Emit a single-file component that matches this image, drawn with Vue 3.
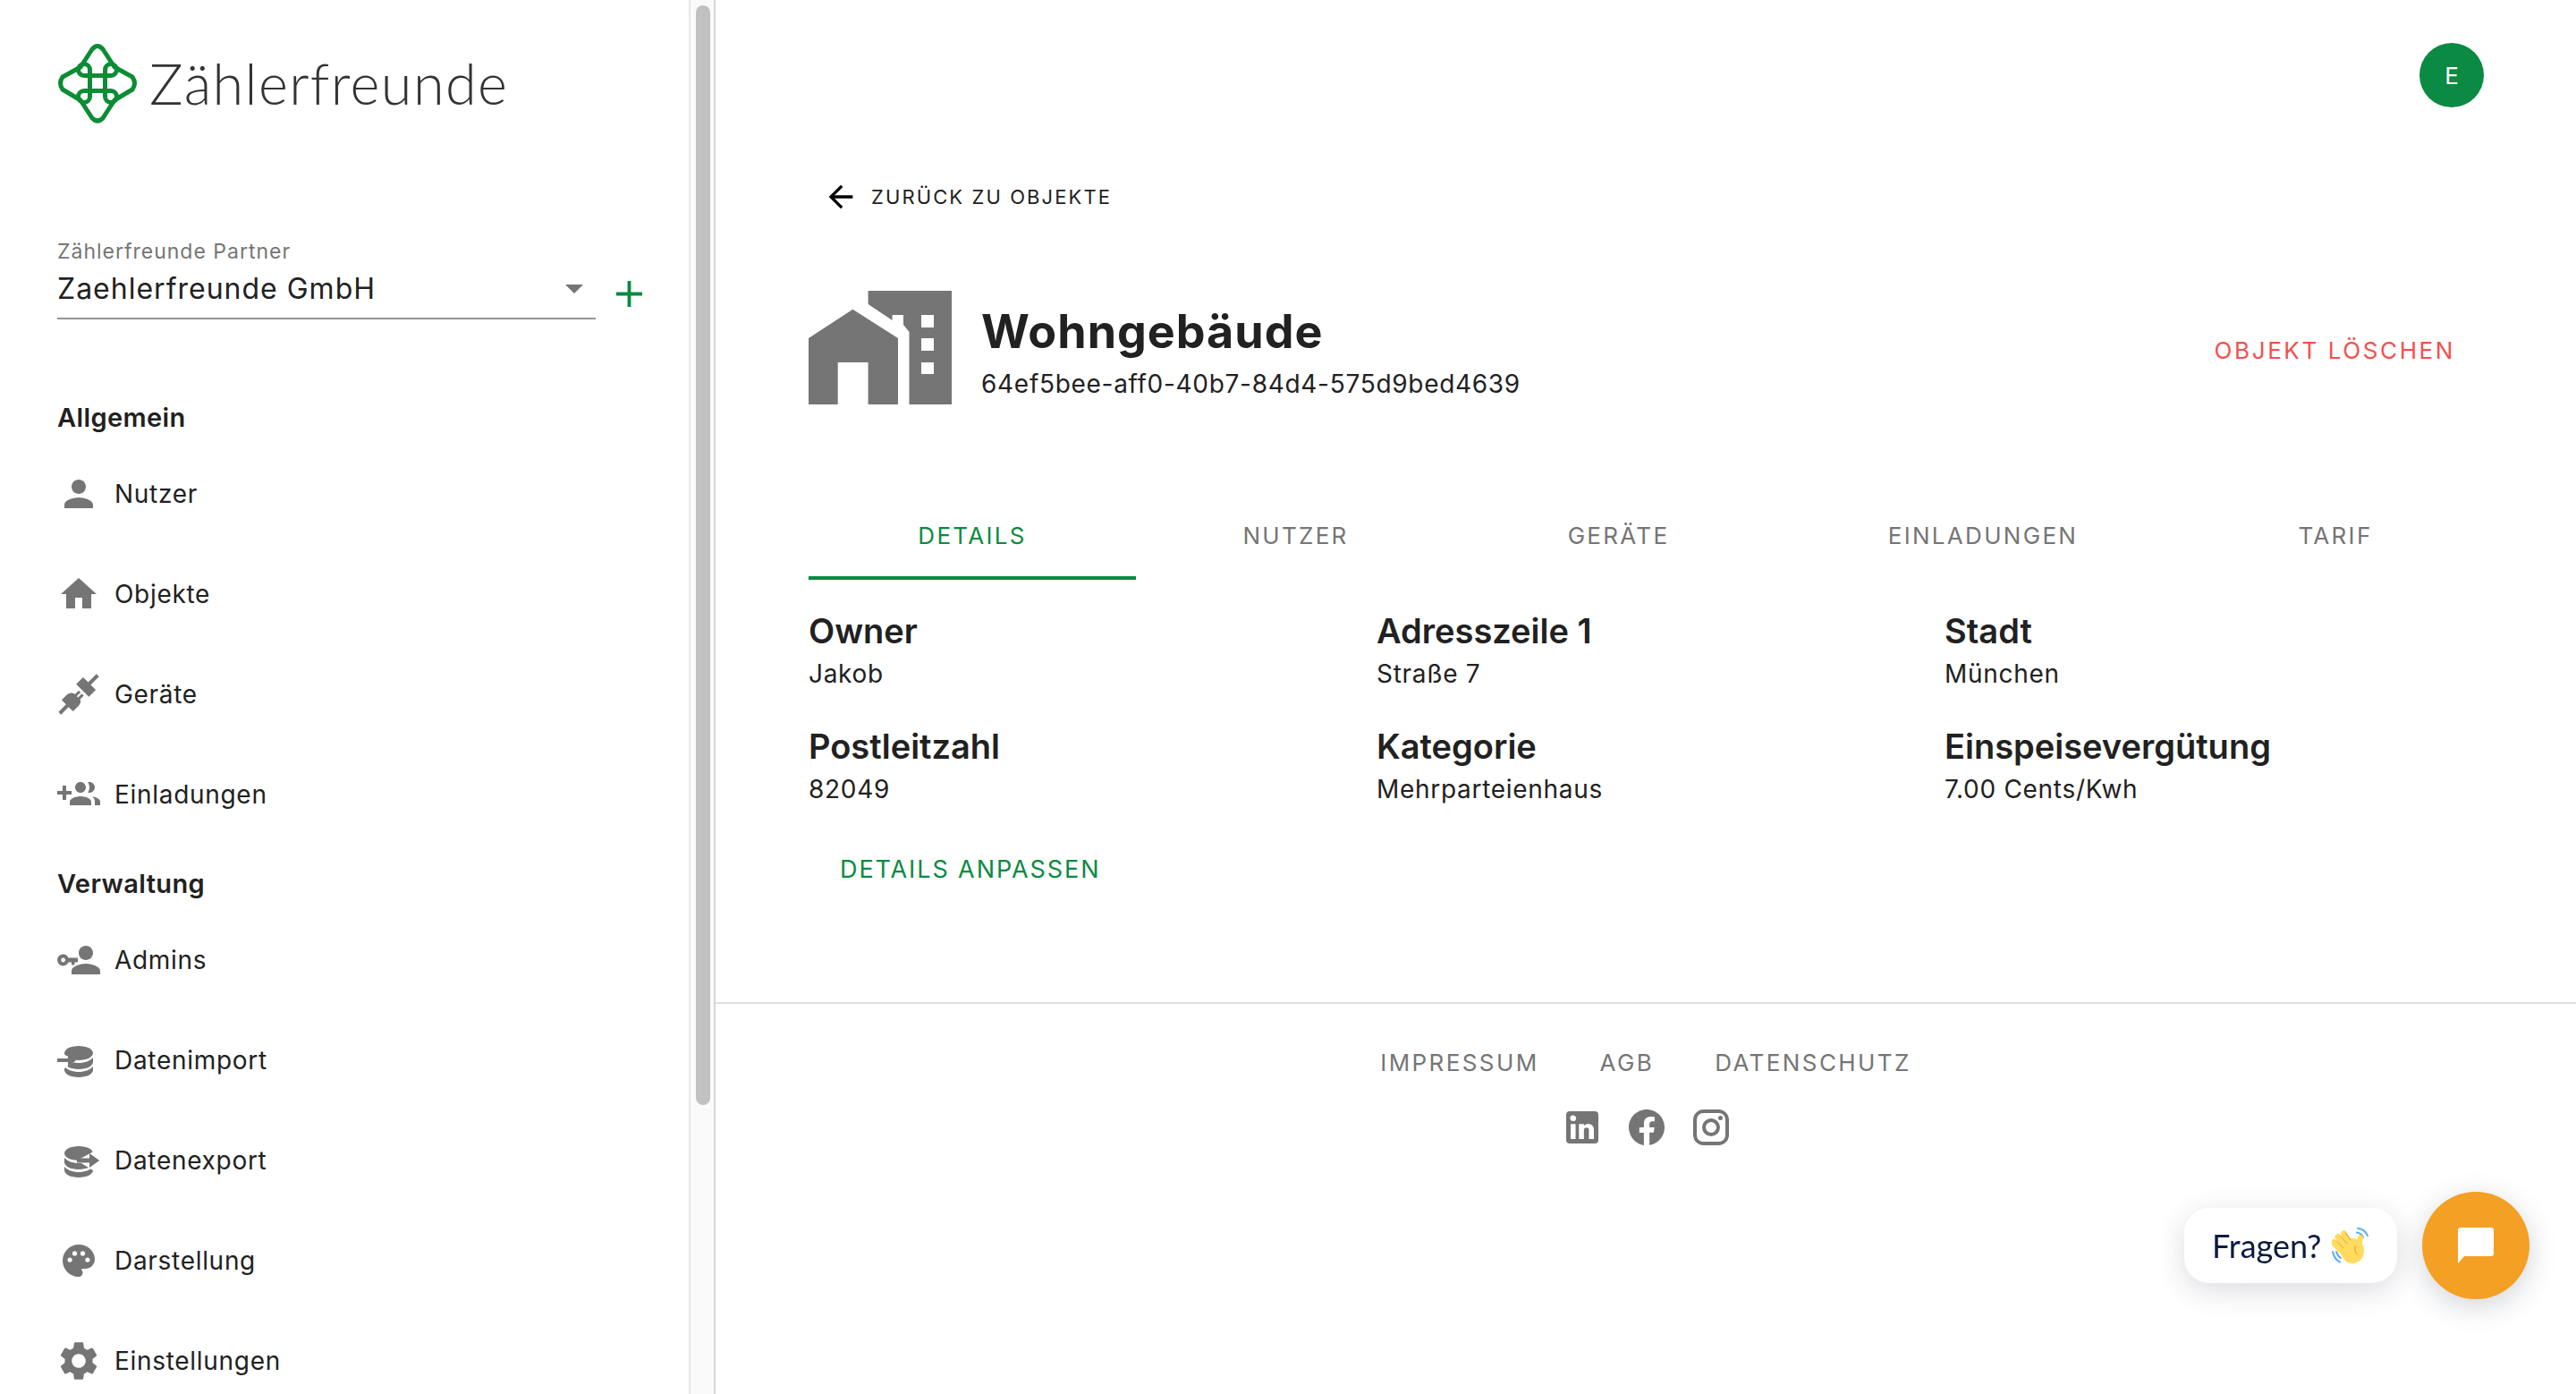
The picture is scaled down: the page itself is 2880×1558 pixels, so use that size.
<script setup>
const db = [
  { d: 'M4 8c0-2.2 3.6-4 8-4s8 1.8 8 4-3.6 4-8 4-8-1.8-8-4z' },
  { d: 'M4 10.5V13c0 2.2 3.6 4 8 4s8-1.8 8-4v-2.5c-1.6 1.9-4.6 3-8 3s-6.4-1.1-8-3z' },
  { d: 'M4 15.5v2c0 2.2 3.6 4 8 4s8-1.8 8-4v-2c-1.6 1.9-4.6 3-8 3s-6.4-1.1-8-3z' },
]

const icons = {
  person: [{ d: 'M12 12c2.21 0 4-1.79 4-4s-1.79-4-4-4-4 1.79-4 4 1.79 4 4 4zm0 2c-2.67 0-8 1.34-8 4v2h16v-2c0-2.66-5.33-4-8-4z' }],
  home: [{ d: 'M10 20v-6h4v6h5v-8h3L12 3 2 12h3v8z' }],
  plug: [
    { d: 'M-3 11H3V7.500H7c2 0 3.500 1.500 3.500 3H13.500V12H10.500V13H13.500V14.500H10.500C10.500 15.500 9 16.500 7 16.500H3V13H-3z', transform: 'rotate(-45 12 12)' },
    { d: 'M15 7h5.500v4H27v2h-6.500v4H15z', transform: 'rotate(-45 12 12)' },
  ],
  groupAdd: [{ d: 'M8 10H5V7H3v3H0v2h3v3h2v-3h3v-2zm10 1c1.66 0 2.99-1.34 2.99-3S19.66 5 18 5c-.32 0-.63.05-.91.14.57.81.9 1.79.9 2.86s-.34 2.04-.9 2.86c.28.09.59.14.91.14zm-5 0c1.66 0 2.99-1.34 2.99-3S14.66 5 13 5s-3 1.34-3 3 1.34 3 3 3zm6.62 2.16c.83.73 1.38 1.66 1.38 2.84v2h3v-2c0-1.54-2.37-2.49-4.38-2.84zM13 13c-2 0-6 1-6 3v2h12v-2c0-2-4-3-6-3z' }],
  admin: [
    { d: 'M16 12c2.21 0 4-1.79 4-4s-1.79-4-4-4-4 1.79-4 4 1.79 4 4 4zm0 2c-2.67 0-8 1.34-8 4v2h16v-2c0-2.66-5.33-4-8-4z' },
    { d: 'M3.3 8.8a3.2 3.2 0 1 0 2.9 4.4H8v1.6h1.7v-1.6h1.8v-2.4H6.2a3.2 3.2 0 0 0-2.9-2zm0 2a1.2 1.2 0 1 1 0 2.4 1.2 1.2 0 0 1 0-2.4z' },
  ],
  dataImport: [
    ...db,
    { d: 'M0 7l10.5 5L2 18H0z', white: true },
    { d: 'M0 11h6V8.6l4.6 3.4L6 15.4V13H0z' },
  ],
  dataExport: [
    ...db,
    { d: 'M24 5l-13 7 13 8z', white: true },
    { d: 'M11 10.8h7V8l5.6 4-5.6 4v-2.8h-7z' },
  ],
  palette: [{ d: 'M12 2C6.49 2 2 6.49 2 12s4.49 10 10 10c1.38 0 2.5-1.12 2.5-2.5 0-.61-.23-1.2-.64-1.67-.08-.1-.13-.21-.13-.33 0-.28.22-.5.5-.5H16c3.31 0 6-2.69 6-6 0-4.96-4.49-9-10-9zm-5.5 11c-.83 0-1.5-.67-1.5-1.5S5.67 10 6.5 10s1.5.67 1.5 1.5S7.33 13 6.5 13zm3-4C8.67 9 8 8.33 8 7.5S8.67 6 9.5 6s1.5.67 1.5 1.5S10.33 9 9.5 9zm5 0c-.83 0-1.5-.67-1.5-1.5S13.67 6 14.5 6s1.5.67 1.5 1.5S15.33 9 14.5 9zm3 4c-.83 0-1.5-.67-1.5-1.5s.67-1.5 1.5-1.5 1.5.67 1.5 1.5-.67 1.5-1.5 1.5z', transform: 'translate(1.2 1.2) scale(.9)' }],
  gear: [{ d: 'M19.14 12.94c.04-.3.06-.61.06-.94 0-.32-.02-.64-.07-.94l2.03-1.58c.18-.14.23-.41.12-.61l-1.92-3.32c-.12-.22-.37-.29-.59-.22l-2.39.96c-.5-.38-1.03-.7-1.62-.94l-.36-2.54c-.04-.24-.24-.41-.48-.41h-3.84c-.24 0-.43.17-.47.41l-.36 2.54c-.59.24-1.13.57-1.62.94l-2.39-.96c-.22-.08-.47 0-.59.22L2.74 8.87c-.12.21-.08.47.12.61l2.03 1.58c-.05.3-.09.63-.09.94s.02.64.07.94l-2.03 1.58c-.18.14-.23.41-.12.61l1.92 3.32c.12.22.37.29.59.22l2.39-.96c.5.38 1.03.7 1.62.94l.36 2.54c.05.24.24.41.48.41h3.84c.24 0 .44-.17.47-.41l.36-2.54c.59-.24 1.13-.56 1.62-.94l2.39.96c.22.08.47 0 .59-.22l1.92-3.32c.12-.22.07-.47-.12-.61l-2.01-1.58zM12 15.6c-1.98 0-3.6-1.62-3.6-3.6s1.62-3.6 3.6-3.6 3.6 1.62 3.6 3.6-1.62 3.6-3.6 3.6z', transform: 'translate(-.96 -.96) scale(1.08)' }],
}

const navGroups = [
  {
    title: 'Allgemein',
    items: [
      { label: 'Nutzer', icon: icons.person },
      { label: 'Objekte', icon: icons.home },
      { label: 'Geräte', icon: icons.plug },
      { label: 'Einladungen', icon: icons.groupAdd },
    ],
  },
  {
    title: 'Verwaltung',
    items: [
      { label: 'Admins', icon: icons.admin },
      { label: 'Datenimport', icon: icons.dataImport },
      { label: 'Datenexport', icon: icons.dataExport },
      { label: 'Darstellung', icon: icons.palette },
      { label: 'Einstellungen', icon: icons.gear },
    ],
  },
]

const tabs = ['Details', 'Nutzer', 'Geräte', 'Einladungen', 'Tarif']

const fields = [
  { label: 'Owner', value: 'Jakob' },
  { label: 'Adresszeile 1', value: 'Straße 7' },
  { label: 'Stadt', value: 'München' },
  { label: 'Postleitzahl', value: '82049' },
  { label: 'Kategorie', value: 'Mehrparteienhaus' },
  { label: 'Einspeisevergütung', value: '7.00 Cents/Kwh' },
]

const socials = [
  'M19 3a2 2 0 0 1 2 2v14a2 2 0 0 1-2 2H5a2 2 0 0 1-2-2V5a2 2 0 0 1 2-2h14m-.5 15.5v-5.3a3.26 3.26 0 0 0-3.26-3.26c-.85 0-1.84.52-2.32 1.3v-1.11h-2.79v8.37h2.79v-4.93c0-.77.62-1.4 1.39-1.4a1.4 1.4 0 0 1 1.4 1.4v4.93h2.79M6.88 8.56a1.68 1.68 0 0 0 1.68-1.68c0-.93-.75-1.69-1.68-1.69a1.69 1.69 0 0 0-1.69 1.69c0 .93.76 1.68 1.69 1.68m1.39 9.94v-8.37H5.5v8.37h2.77z',
  'M12 2.04c-5.5 0-10 4.49-10 10.02 0 5 3.66 9.15 8.44 9.9v-7H7.9v-2.9h2.54V9.85c0-2.51 1.49-3.89 3.78-3.89 1.09 0 2.23.19 2.23.19v2.47h-1.26c-1.24 0-1.63.77-1.63 1.53v1.88h2.78l-.45 2.9h-2.33v7a10 10 0 0 0 8.44-9.9c0-5.53-4.5-10.02-10-10.02z',
  'M7.8 2h8.4C19.4 2 22 4.6 22 7.8v8.4a5.8 5.8 0 0 1-5.8 5.8H7.8C4.6 22 2 19.4 2 16.2V7.8A5.8 5.8 0 0 1 7.8 2m-.2 2A3.6 3.6 0 0 0 4 7.6v8.8C4 18.39 5.61 20 7.6 20h8.8a3.6 3.6 0 0 0 3.6-3.6V7.6C20 5.61 18.39 4 16.4 4H7.6m9.65 1.5a1.25 1.25 0 0 1 1.25 1.25A1.25 1.25 0 0 1 17.25 8 1.25 1.25 0 0 1 16 6.75a1.25 1.25 0 0 1 1.25-1.25M12 7a5 5 0 0 1 5 5 5 5 0 0 1-5 5 5 5 0 0 1-5-5 5 5 0 0 1 5-5m0 2a3 3 0 0 0-3 3 3 3 0 0 0 3 3 3 3 0 0 0 3-3 3 3 0 0 0-3-3z',
]
</script>

<template>
  <div class="page">
    <aside class="sidebar">
      <div class="sidebar-inner">
        <div class="logo">
          <svg class="logo-mark" viewBox="0 0 90 90" fill="none" stroke="#0b8c35" stroke-width="5" stroke-linejoin="round">
            <path d="M39 7Q45 0 51 7L64 27 84 38Q89 45 84 52L64 64 51 84Q45 90 39 84L26 64 6 52Q1 45 6 38L26 27z" />
            <path d="M36.5 60V30a6.5 6.5 0 1 0-6.5 6.5H60a6.5 6.5 0 1 0-6.5-6.5V60a6.5 6.5 0 1 0 6.5-6.5H30a6.5 6.5 0 1 0 6.5 6.5z" />
          </svg>
          <span class="logo-text">Zählerfreunde</span>
        </div>

        <div class="partner">
          <div class="select">
            <span class="select-label">Zählerfreunde Partner</span>
            <div class="select-value">
              <span>Zaehlerfreunde GmbH</span>
              <i class="caret"></i>
            </div>
          </div>
          <svg class="plus" viewBox="0 0 30 30"><path d="M13 0h4v13h13v4H17v13h-4V17H0v-4h13z" /></svg>
        </div>

        <nav v-for="group in navGroups" :key="group.title" class="nav-group">
          <h3>{{ group.title }}</h3>
          <a v-for="item in group.items" :key="item.label" class="nav-item">
            <svg class="nav-icon" viewBox="0 0 24 24">
              <path
                v-for="(part, i) in item.icon"
                :key="i"
                :d="part.d"
                :fill="part.white ? '#fff' : '#757575'"
                :transform="part.transform"
              />
            </svg>
            <span>{{ item.label }}</span>
          </a>
        </nav>
      </div>
      <div class="scrollbar"><div class="scrollbar-thumb"></div></div>
    </aside>

    <main class="main">
      <header class="topbar">
        <div class="avatar">E</div>
      </header>

      <a class="back">
        <svg viewBox="0 0 24 24"><path d="M20 11H7.83l5.59-5.59L12 4l-8 8 8 8 1.41-1.41L7.83 13H20v-2z" /></svg>
        <span>Zurück zu Objekte</span>
      </a>

      <section class="object-head">
        <svg class="building" viewBox="0 0 160 127">
          <path fill-rule="evenodd" d="M66.6 0H160V127H112.5V46L106 38V27H93.6V33L66.6 15zM126 27V41H140V27zM126 53V67H140V53zM126 80V93H140V80z" />
          <path d="M49.4 20.7L100 53V127H66.6V80H32.7V127H0V53z" />
        </svg>
        <div class="object-title">
          <h1>Wohngebäude</h1>
          <p>64ef5bee-aff0-40b7-84d4-575d9bed4639</p>
        </div>
        <button class="delete">Objekt löschen</button>
      </section>

      <div class="tabs">
        <button v-for="(tab, i) in tabs" :key="tab" class="tab" :class="{ active: i === 0 }">{{ tab }}</button>
      </div>

      <div class="fields">
        <div v-for="field in fields" :key="field.label" class="field">
          <h2>{{ field.label }}</h2>
          <p>{{ field.value }}</p>
        </div>
      </div>

      <button class="edit">Details anpassen</button>

      <footer class="footer">
        <div class="footer-links">
          <a>Impressum</a>
          <a>AGB</a>
          <a>Datenschutz</a>
        </div>
        <div class="socials">
          <svg v-for="d in socials" :key="d" viewBox="0 0 24 24"><path :d="d" /></svg>
        </div>
      </footer>
    </main>

    <div class="chat">
      <div class="chat-bubble">
        <span>Fragen?</span>
        <svg class="wave" viewBox="0 0 41 40">
          <g fill="none" stroke="#5dadec" stroke-width="2" stroke-linecap="round">
            <path d="M1 27c1 5 3 9 8 11.500" />
            <path d="M5 27c.7 3 2 5 5 7" />
            <path d="M29 1c5 .5 9 3 11 8" />
            <path d="M28 5.500c3 .5 5.500 2 7 5.500" />
          </g>
          <g fill="#ffdc5d">
            <rect x="3" y="11" width="7" height="20" rx="3.500" transform="rotate(-42 7 21)" />
            <rect x="8" y="5" width="7" height="22" rx="3.500" transform="rotate(-38 12 16)" />
            <rect x="14" y="2" width="7" height="22" rx="3.500" transform="rotate(-32 18 13)" />
            <rect x="28" y="8" width="6" height="17" rx="3" transform="rotate(12 30 16)" />
            <ellipse cx="23" cy="26" rx="13" ry="14" />
          </g>
          <g fill="none" stroke="#ef9645" stroke-width="1" stroke-linecap="round">
            <path d="M26 21c-1 4 1 7 2 9" />
            <path d="M5.500 15l7 7.500M10 10l7 8M15 6l6 8" />
          </g>
        </svg>
      </div>
      <button class="chat-button">
        <svg viewBox="0 0 40 40"><path d="M3 0H37a3 3 0 0 1 3 3V29a3 3 0 0 1-3 3H7L0 40V3a3 3 0 0 1 3-3z" /></svg>
      </button>
    </div>
  </div>
</template>

<style>
html,
body {
  margin: 0;
  overflow: hidden;
  background: #fff;
}
</style>

<style scoped>
.page {
  display: flex;
  height: 1558px;
  font-family: Inter, "Liberation Sans", sans-serif;
  color: #212121;
  overflow: hidden;
}

button {
  border: 0;
  padding: 0;
  background: none;
  font: inherit;
  cursor: pointer;
}

.sidebar {
  flex: 0 0 800px;
  display: flex;
  box-sizing: border-box;
  height: 100%;
  border-right: 2px solid #d6d6d6;
  overflow: hidden;
}

.sidebar-inner {
  flex: 0 0 770px;
  box-sizing: border-box;
  padding: 48px 0 0 64px;
}

.scrollbar {
  flex: 1;
  box-sizing: border-box;
  padding: 6px 0 0 6px;
  background: #fafafa;
  border-left: 2px solid #e8e8e8;
}

.scrollbar-thumb {
  width: 16px;
  height: 1229px;
  border-radius: 8px;
  background: #c1c1c1;
}

.logo {
  display: flex;
  align-items: center;
  gap: 13px;
  height: 90px;
}

.logo-mark {
  width: 90px;
  height: 90px;
  overflow: visible;
}

.logo-text {
  font-family: Lato, sans-serif;
  font-weight: 300;
  font-size: 63px;
  letter-spacing: 1.4px;
  color: #333;
  line-height: 90px;
}

.partner {
  display: flex;
  align-items: flex-end;
  margin-top: 127px;
}

.select {
  flex: 0 0 602px;
  border-bottom: 2px solid #949494;
}

.select-label {
  display: block;
  font-size: 23px;
  line-height: 32px;
  letter-spacing: 1px;
  color: #757575;
}

.select-value {
  display: flex;
  justify-content: space-between;
  align-items: center;
  padding: 4px 14px 10px 0;
  font-size: 32px;
  line-height: 44px;
  letter-spacing: 1px;
}

.caret {
  width: 0;
  height: 0;
  border-left: 10px solid transparent;
  border-right: 10px solid transparent;
  border-top: 10px solid #757575;
}

.plus {
  width: 29px;
  height: 29px;
  margin: 0 0 14px 23px;
  fill: #0a8a42;
}

.nav-group h3 {
  margin: 0;
  font-size: 29px;
  font-weight: 600;
  line-height: 58px;
  letter-spacing: 0.4px;
}

.partner + .nav-group {
  margin-top: 81px;
}

.nav-group + .nav-group {
  margin-top: 15px;
}

.nav-item {
  display: flex;
  align-items: center;
  height: 112px;
  font-size: 28px;
  letter-spacing: 0.7px;
}

.nav-icon {
  flex: none;
  width: 48px;
  height: 48px;
  margin-right: 16px;
  overflow: visible;
}

.main {
  flex: 1;
  min-width: 0;
  display: flex;
  flex-direction: column;
}

.topbar {
  display: flex;
  justify-content: flex-end;
  padding: 48px 103px 0 0;
}

.avatar {
  display: flex;
  align-items: center;
  justify-content: center;
  width: 72px;
  height: 72px;
  border-radius: 50%;
  background: #0a8a42;
  color: #fff;
  font-size: 26px;
}

.back {
  display: flex;
  align-items: center;
  gap: 18px;
  height: 60px;
  margin: 70px 0 0 120px;
  font-size: 22px;
  letter-spacing: 2.1px;
  text-transform: uppercase;
}

.back svg {
  width: 40px;
  height: 40px;
  margin-right: -4px;
}

.object-head {
  display: flex;
  align-items: center;
  margin: 75px 0 0 104px;
  padding-right: 135px;
}

.building {
  flex: none;
  width: 160px;
  height: 127px;
  fill: #757575;
}

.object-title {
  flex: 1;
  margin-left: 33px;
  padding-top: 10px;
}

.object-title h1 {
  margin: 0;
  font-size: 52px;
  font-weight: 700;
  line-height: 64px;
  letter-spacing: 1px;
}

.object-title p {
  margin: 6px 0 0;
  font-size: 28px;
  line-height: 40px;
  letter-spacing: 0.7px;
}

.delete {
  margin-top: 6px;
  color: #f44f4f;
  font-size: 26px;
  letter-spacing: 2.6px;
  text-transform: uppercase;
}

.tabs {
  display: grid;
  grid-template-columns: 366px 357px 365px 450px 338px;
  margin: 100px 0 0 104px;
}

.tab {
  height: 96px;
  border-bottom: 4px solid transparent;
  box-sizing: border-box;
  color: #757575;
  font-size: 26px;
  letter-spacing: 2.3px;
  text-transform: uppercase;
}

.tab.active {
  color: #0a8a42;
  border-bottom-color: #0a8a42;
}

.fields {
  display: grid;
  grid-template-columns: repeat(3, 635px);
  row-gap: 33px;
  margin: 29px 0 0 104px;
}

.field h2 {
  margin: 0;
  font-size: 38px;
  font-weight: 600;
  line-height: 56px;
}

.field p {
  margin: 0;
  font-size: 28px;
  line-height: 40px;
  letter-spacing: 0.7px;
}

.edit {
  align-self: flex-start;
  height: 72px;
  margin: 33px 0 0 139px;
  color: #0a8a42;
  font-size: 27px;
  letter-spacing: 1.9px;
  text-transform: uppercase;
}

.footer {
  margin-top: 113px;
  border-top: 2px solid #e0e0e0;
}

.footer-links {
  display: flex;
  justify-content: center;
  gap: 68px;
  height: 44px;
  margin-top: 44px;
  line-height: 44px;
  color: #757575;
  font-size: 26px;
  letter-spacing: 2.4px;
  text-transform: uppercase;
}

.socials {
  display: flex;
  justify-content: center;
  gap: 24px;
  margin: 26px 0 0 2px;
}

.socials svg {
  width: 48px;
  height: 48px;
  fill: #757575;
}

.chat {
  position: fixed;
  right: 52px;
  bottom: 106px;
  display: flex;
  align-items: center;
  gap: 28px;
  font-family: Lato, sans-serif;
}

.chat-bubble {
  display: flex;
  align-items: center;
  gap: 12px;
  box-sizing: border-box;
  width: 238px;
  height: 84px;
  padding-left: 31px;
  border-radius: 28px;
  background: #fff;
  color: #0b1c3f;
  font-size: 36px;
  box-shadow: 0 8px 32px rgba(30, 40, 60, 0.16);
}

.wave {
  width: 41px;
  height: 40px;
}

.chat-button {
  display: flex;
  align-items: center;
  justify-content: center;
  width: 120px;
  height: 120px;
  border-radius: 50%;
  background: #f4a024;
  box-shadow: 0 8px 32px rgba(30, 40, 60, 0.2);
}

.chat-button svg {
  width: 40px;
  height: 40px;
  fill: #fff;
}
</style>
